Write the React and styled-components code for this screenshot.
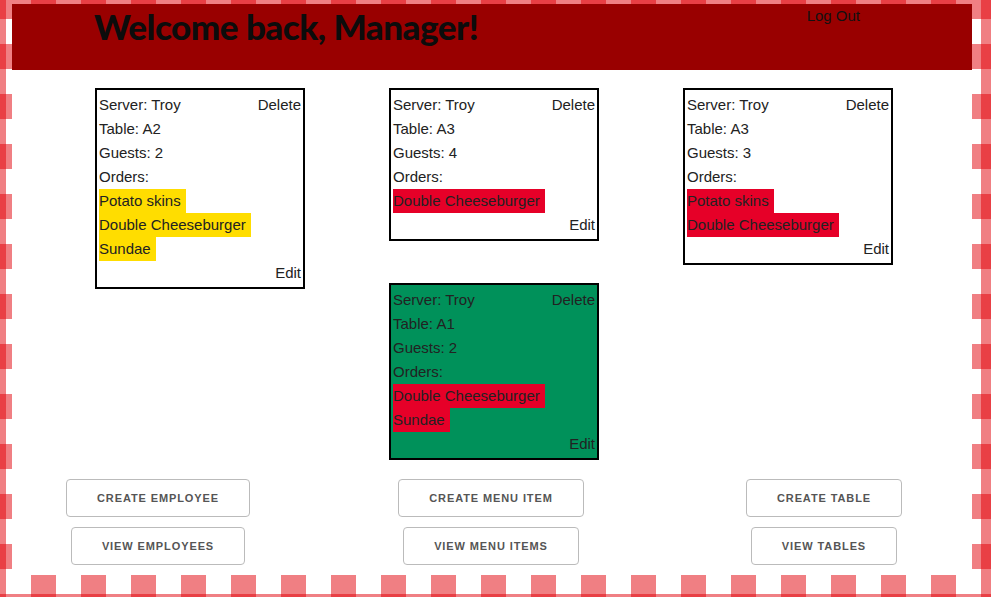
import styled, { createGlobalStyle } from 'styled-components';

const GlobalStyle = createGlobalStyle`
  html {
    background-color: #fff;
    background-image:
      linear-gradient(90deg, rgba(225, 0, 8, 0.5) 50%, transparent 50%),
      linear-gradient(rgba(225, 0, 8, 0.5) 50%, transparent 50%);
    background-size: 50px 50px;
    background-position: 31px 44px;
  }

  body {
    margin: 4px 0 0 12px;
    font-family: "Liberation Sans", Arial, sans-serif;
    font-size: 15px;
    line-height: 24px;
    color: #222;
  }
`;

const Page = styled.div`
  width: 960px;
  background: #fff;
  padding-bottom: 10px;
`;

const Header = styled.header`
  display: flex;
  align-items: flex-start;
  height: 66px;
  background: #990000;
`;

const Title = styled.h1`
  margin: 0;
  padding: 0 0 0 82px;
  font-family: Lato, "Open Sans", sans-serif;
  font-size: 35px;
  font-weight: 900;
  line-height: 44px;
  letter-spacing: -0.5px;
  color: #0c0c0c;
`;

const LogOut = styled.a`
  margin-left: auto;
  margin-right: 112px;
  color: #111;
  cursor: pointer;
`;

const Board = styled.div`
  display: grid;
  grid-template-columns: repeat(3, 210px);
  column-gap: 84px;
  align-items: start;
  margin-top: 18px;
  padding-left: 83px;
`;

const Column = styled.div`
  display: flex;
  flex-direction: column;
  gap: 42px;
`;

const Card = styled.div`
  box-sizing: border-box;
  width: 210px;
  padding: 3px 2px 2px;
  border: 2px solid #000;
  background: ${(p) => (p.$ready ? '#00915a' : '#fff')};
`;

const Line = styled.div`
  display: flex;
  justify-content: ${(p) => (p.$end ? 'flex-end' : 'space-between')};
`;

const Item = styled.span`
  padding-right: 5px;
  background: ${(p) => (p.$cooking ? '#e60028' : '#ffdd00')};
`;

const Actions = styled.div`
  display: grid;
  grid-template-columns: 292px 374px 292px;
  margin-top: 19px;
`;

const ActionGroup = styled.div`
  display: flex;
  flex-direction: column;
  align-items: center;
  gap: 10px;
`;

const Button = styled.button`
  box-sizing: border-box;
  height: 38px;
  padding: 0 30px;
  border: 1px solid #bbb;
  border-radius: 4px;
  background: transparent;
  color: #555;
  font-family: "Liberation Sans", Arial, sans-serif;
  font-size: 11px;
  font-weight: 700;
  line-height: 36px;
  letter-spacing: 0.9px;
  text-transform: uppercase;
  cursor: pointer;
`;

const tickets = [
  [{ table: 'A2', guests: 2, orders: ['Potato skins', 'Double Cheeseburger', 'Sundae'], cooking: false }],
  [
    { table: 'A3', guests: 4, orders: ['Double Cheeseburger'], cooking: true },
    { table: 'A1', guests: 2, orders: ['Double Cheeseburger', 'Sundae'], cooking: true, ready: true },
  ],
  [{ table: 'A3', guests: 3, orders: ['Potato skins', 'Double Cheeseburger'], cooking: true }],
];

const actions = [
  ['Create Employee', 'View Employees'],
  ['Create Menu Item', 'View Menu Items'],
  ['Create Table', 'View Tables'],
];

function Ticket({ table, guests, orders, cooking, ready }) {
  return (
    <Card $ready={ready}>
      <Line>
        <span>Server: Troy</span>
        <span>Delete</span>
      </Line>
      <Line>Table: {table}</Line>
      <Line>Guests: {guests}</Line>
      <Line>Orders:</Line>
      {orders.map((o, i) => (
        <Line key={i}>
          <Item $cooking={cooking}>{o}</Item>
        </Line>
      ))}
      <Line $end>Edit</Line>
    </Card>
  );
}

export default function App() {
  return (
    <>
      <GlobalStyle />
      <Page>
        <Header>
          <Title>Welcome back, Manager!</Title>
          <LogOut>Log Out</LogOut>
        </Header>
        <Board>
          {tickets.map((col, i) => (
            <Column key={i}>
              {col.map((t, j) => (
                <Ticket key={j} {...t} />
              ))}
            </Column>
          ))}
        </Board>
        <Actions>
          {actions.map((group, i) => (
            <ActionGroup key={i}>
              {group.map((label) => (
                <Button key={label}>{label}</Button>
              ))}
            </ActionGroup>
          ))}
        </Actions>
      </Page>
    </>
  );
}
